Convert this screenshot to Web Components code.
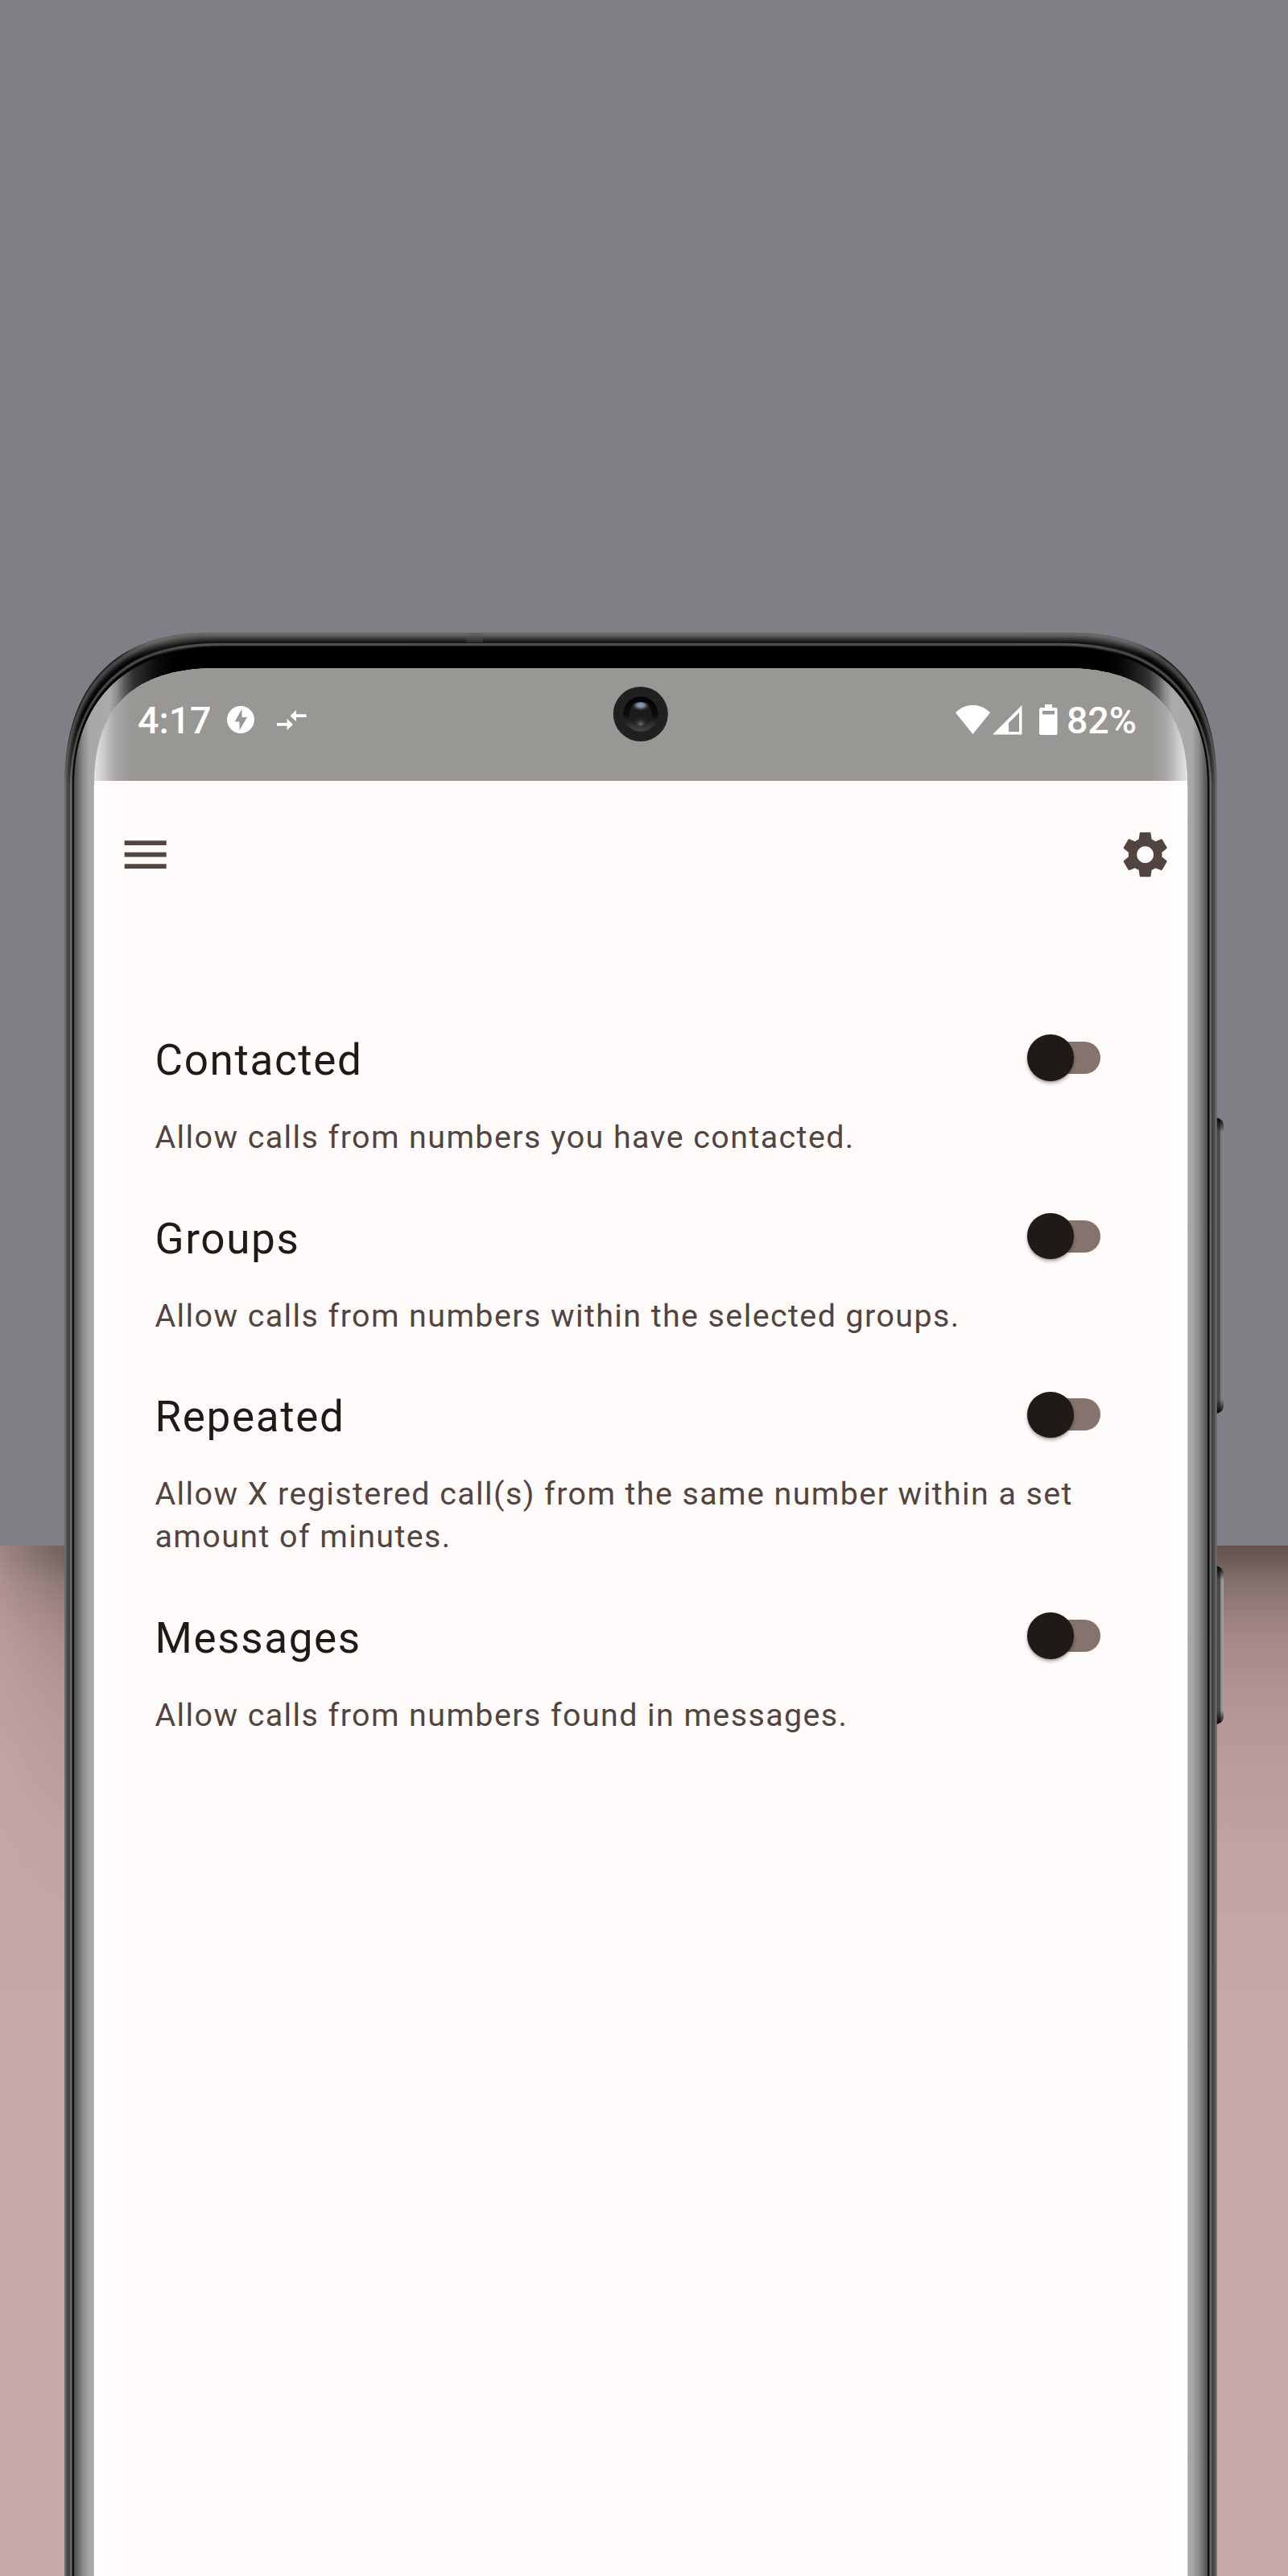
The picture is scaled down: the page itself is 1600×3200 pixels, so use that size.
<!DOCTYPE html>
<html lang="en">
<head>
<meta charset="utf-8">
<title>Call filter</title>
<style>
body{margin:0;font-family:Roboto,"Liberation Sans",sans-serif}
</style>
</head>
<body>
<promo-stage>
  <phone-frame>
    <status-bar slot="status" time="4:17" battery="82%"></status-bar>
    <app-bar></app-bar>
    <settings-list>
      <setting-row heading="Contacted">Allow calls from numbers you have contacted.</setting-row>
      <setting-row heading="Groups">Allow calls from numbers within the selected groups.</setting-row>
      <setting-row heading="Repeated">Allow X registered call(s) from the same number within a set amount of minutes.</setting-row>
      <setting-row heading="Messages">Allow calls from numbers found in messages.</setting-row>
    </settings-list>
  </phone-frame>
</promo-stage>
<script>
const define = (name, html, setup) => customElements.define(name, class extends HTMLElement {
  constructor() {
    super();
    this.attachShadow({ mode: 'open' }).innerHTML = html;
  }
  connectedCallback() { if (setup && !this.ready) { this.ready = true; setup(this, this.shadowRoot); } }
});

define('promo-stage', `
<style>
:host{display:flex;box-sizing:border-box;width:1600px;height:3200px;padding:786px 88px 0 80px;overflow:hidden;
background:
 linear-gradient(90deg,rgba(199,168,168,.6) 0,rgba(199,168,168,.12) 80px,transparent 81px) 0 1920px/100% 480px no-repeat,
 linear-gradient(180deg,#655352 0,#6b5a59 16px,#84706f 46px,#9b7f80 87px,#a58888 115px,#b09292 175px,#b99a9a 253px,#c1a1a2 368px,#c5a6a6 482px,#c8a9a9 640px) 0 1920px/100% 1280px no-repeat,
 #7f8085}
</style><slot></slot>`);

define('phone-frame', `
<style>
:host{display:block;position:relative;width:1432px;height:2414px}
svg{position:absolute;left:0;top:0;overflow:visible}
.screen{box-sizing:border-box;display:flex;flex-direction:column;position:relative;width:1358px;height:2370px;margin:0 37px;top:44px;
background:linear-gradient(90deg,#fff,#fffbfa 32px,#fffbfa 1326px,#fff);
clip-path:path('M0 2370V145C0 50 48 0 153 0H1205C1310 0 1358 50 1358 145V2370Z')}
</style>
<svg class="shell" width="1520" height="2414" viewBox="80 786 1520 2414">
 <defs>
  <linearGradient id="bez" gradientUnits="userSpaceOnUse" x1="91.5" y1="0" x2="1501" y2="0"></linearGradient>
  <linearGradient id="btn" x1="0" x2="1" y1="0" y2="0"><stop offset="0" stop-color="#333"/><stop offset=".2" stop-color="#484848"/><stop offset=".6" stop-color="#484848"/><stop offset=".68" stop-color="#777"/><stop offset="1" stop-color="#858585"/></linearGradient>
  <linearGradient id="btn2" x1="0" x2="1" y1="0" y2="0"><stop offset="0" stop-color="#333"/><stop offset=".2" stop-color="#484848"/><stop offset=".6" stop-color="#484848"/><stop offset=".75" stop-color="#8f9190"/><stop offset="1" stop-color="#a0a5a3"/></linearGradient>
  <linearGradient id="cap" gradientUnits="userSpaceOnUse" x1="0" x2="0" y1="1388" y2="1756.5"><stop offset="0"/><stop offset=".05" stop-opacity="0"/><stop offset=".95" stop-opacity="0"/><stop offset="1"/></linearGradient>
  <linearGradient id="cap2" gradientUnits="userSpaceOnUse" x1="0" x2="0" y1="1945" y2="2142.5"><stop offset="0"/><stop offset=".09" stop-opacity="0"/><stop offset=".91" stop-opacity="0"/><stop offset="1"/></linearGradient>
 </defs>
 <path d="M1508 1388Q1520 1389 1520 1399V1746Q1520 1755 1508 1756.500Z" fill="url(#btn)"/>
 <path d="M1508 1388Q1520 1389 1520 1399V1746Q1520 1755 1508 1756.500Z" fill="url(#cap)"/>
 <path d="M1508 1945Q1520 1946 1520 1956V2132Q1520 2141 1508 2142.500Z" fill="url(#btn2)"/>
 <path d="M1508 1945Q1520 1946 1520 1956V2132Q1520 2141 1508 2142.500Z" fill="url(#cap2)"/>
 <g id="rings"></g>
 <rect x="579" y="787" width="21" height="11" fill="#555" fill-opacity=".35"/>
</svg>
<div class="screen"><slot name="status"></slot><slot></slot></div>
<svg width="1432" height="200" viewBox="80 786 1432 200">
 <defs>
  <linearGradient id="ring" x1="0" x2="0" y1="0" y2="1"><stop offset="0" stop-color="#020202"/><stop offset=".5" stop-color="#0a0a0a"/><stop offset="1" stop-color="#474747"/></linearGradient>
  <radialGradient id="top" cx=".5" cy=".25" r=".5"><stop offset="0" stop-color="#8f9db8"/><stop offset=".35" stop-color="#8088a0"/><stop offset="1" stop-color="#1b1b1b" stop-opacity="0"/></radialGradient>
  <radialGradient id="bot" cx=".5" cy=".95" r=".35"><stop offset="0" stop-color="#777"/><stop offset="1" stop-color="#1b1b1b" stop-opacity="0"/></radialGradient>
 </defs>
 <circle cx="795.800" cy="887" r="34" fill="#202020"/>
 <circle cx="795.800" cy="887" r="21.700" fill="url(#ring)"/>
 <circle cx="795.800" cy="887" r="14.200" fill="#1b1b1b"/>
 <ellipse cx="795.800" cy="880" rx="12.500" ry="8" fill="url(#top)"/>
 <circle cx="795.800" cy="887" r="14.200" fill="url(#bot)"/>
</svg>`, (host, root) => {
  const ns = 'http://www.w3.org/2000/svg';
  const make = (n, a, p) => { const e = document.createElementNS(ns, n); for (const k in a) e.setAttribute(k, a[k]); p.append(e); return e; };
  const rings = root.querySelector('#rings'), defs = root.querySelector('defs');
  // Outline of the shell: t=0 outer edge, t=1 inner edge of the metal rim
  const A = [80, 1511.7, 786, 145, 850, 257], B = [91.5, 1500.5, 803, 160, 868, 275];
  const outline = t => {
    const [l, r, y, cx, cy, ex] = A.map((v, i) => v + (B[i] - v) * t);
    const m = v => l + r - v;
    return `M${l} 3210V975C${l} ${cy} ${cx} ${y} ${ex} ${y}H${m(ex)}C${m(cx)} ${y} ${r} ${cy} ${r} 975V3210Z`;
  };
  const ramp = (stops, t) => {
    let i = 1; while (i < stops.length - 1 && stops[i][0] < t) i++;
    const [a, u] = stops[i - 1], [b, v] = stops[i];
    const c = Math.round(u + (v - u) * Math.min(1, Math.max(0, (t - a) / (b - a))));
    return `rgb(${c},${c},${c})`;
  };
  const top = [[0, 100], [.1, 106], [.3, 75], [.65, 22], [.72, 5], [.76, 85], [.9, 95], [.95, 40], [1, 0]];
  const corner = [[0, 10], [.05, 60], [.18, 75], [.45, 15], [.64, 0], [.7, 60], [.76, 85], [.82, 60], [.88, 0], [1, 0]];
  const side = [[0, 105], [.1, 105], [.3, 72], [.55, 62], [.62, 105], [.77, 108], [.82, 40], [.88, 8], [1, 12]];
  const N = 24;
  for (let i = 0; i <= N; i++) {
    const t = i / N;
    const g = make('linearGradient', { id: 'r' + i, gradientUnits: 'userSpaceOnUse', x1: 0, x2: 0, y1: 786, y2: 986 }, defs);
    [[0, top], [.06, top], [.16, corner], [.5, corner], [.95, side]].forEach(([o, s]) => make('stop', { offset: o, 'stop-color': ramp(s, t) }, g));
    make('path', { d: outline(t), fill: `url(#r${i})` }, rings);
  }
  const bez = root.querySelector('#bez');
  const bs = [[0, 75], [4, 95], [12, 140], [20, 168], [45, 170], [54, 140], [62, 95], [74, 50], [90, 28], [105, 10], [125, 0]];
  const W = 1409.5;
  bs.forEach(([x, c]) => make('stop', { offset: x / W, 'stop-color': `rgb(${c},${c},${c})` }, bez));
  bs.reverse().forEach(([x, c]) => make('stop', { offset: 1 - x / W, 'stop-color': `rgb(${c},${c},${c})` }, bez));
  make('path', { d: outline(1.04), fill: 'url(#bez)' }, rings);
  make('path', { d: 'M116.500 3200V975M1475.500 975V3200', fill: 'none', stroke: '#c8c8c8', 'stroke-opacity': .6 }, rings);
});

define('status-bar', `
<style>
:host{display:flex;box-sizing:border-box;align-items:center;height:140px;padding:0 63px 12px 54px;color:#fff;font-size:46.500px;font-weight:500;line-height:56px;
background:linear-gradient(90deg,rgba(255,255,255,.75),rgba(255,255,255,.5) 12px,rgba(255,255,255,.17) 25px,transparent 45px,transparent 1313px,rgba(255,255,255,.17) 1333px,rgba(255,255,255,.5) 1346px,rgba(255,255,255,.75)),#999794}
svg{display:block;fill:#fff;flex:none}
span{padding-top:2px}
.sp{flex:1}
</style>
<span class="t"></span>
<svg width="34" height="34" viewBox="0 0 34 34" style="margin-left:19px"><path fill-rule="evenodd" d="M17 0a17 17 0 1 0 0 34a17 17 0 1 0 0-34ZM18.500 4L9.500 19.500H15.500V30L25 14H18.500Z"/></svg>
<svg width="37" height="25" viewBox="0 0 37 25" style="margin-left:28px"><path d="M24 0V5.300H36.500V9H24V14.300L16.500 7.200ZM0 16H12.500V10.700L20 17.900L12.500 25V19.700H0Z"/></svg>
<span class="sp"></span>
<svg width="43" height="36.500" viewBox="0 0 44 37" preserveAspectRatio="none"><path d="M0 9.500C12-3.200 32-3.200 44 9.500L22 36.500Z"/></svg>
<svg width="37" height="37" viewBox="0 0 37 37" style="margin-left:3px"><path fill-rule="evenodd" d="M36.500 0V36.500H0ZM33 9L20 22V33H33Z"/></svg>
<svg width="23" height="38" viewBox="0 0 23 38" style="margin-left:20.500px"><path d="M7 0H16V4H20Q22.500 4 22.500 6.500V35.500Q22.500 38 20 38H2.500Q0 38 0 35.500V6.500Q0 4 2.500 4H7Z"/><path fill="#999794" d="M4 8H19V12.500H4Z"/></svg>
<span class="b" style="margin-left:11px"></span>`, (h, r) => {
  r.querySelector('.t').textContent = h.getAttribute('time');
  r.querySelector('.b').textContent = h.getAttribute('battery');
});

define('app-bar', `
<style>
:host{display:flex;box-sizing:border-box;height:182px;padding:.6px 17.400px 0 28.500px;justify-content:space-between;align-items:center;color:#52443f}
svg{display:block;fill:#52443f}
</style>
<svg width="69.300" height="69.300" viewBox="0 0 24 24"><path d="M3 18h18v-2H3v2zm0-5h18v-2H3v2zm0-7v2h18V6H3z"/></svg>
<svg width="69.300" height="69.300" viewBox="0 0 24 24"><path d="M19.140 12.940c.04-.3.06-.61.06-.94 0-.32-.02-.64-.07-.94l2.030-1.580c.18-.14.23-.41.12-.61l-1.920-3.320c-.12-.22-.37-.29-.59-.22l-2.390.96c-.5-.38-1.030-.7-1.620-.94l-.36-2.540c-.04-.24-.24-.41-.48-.41h-3.840c-.24 0-.43.17-.47.41l-.36 2.540c-.59.24-1.130.57-1.620.94l-2.390-.96c-.22-.08-.47 0-.59.22L2.740 8.870c-.12.21-.08.47.12.61l2.030 1.580c-.05.3-.09.63-.09.94s.02.64.07.94l-2.030 1.580c-.18.14-.23.41-.12.61l1.920 3.320c.12.22.37.29.59.22l2.390-.96c.5.38 1.030.7 1.620.94l.36 2.540c.05.24.24.41.48.41h3.840c.24 0 .44-.17.47-.41l.36-2.540c.59-.24 1.130-.56 1.620-.94l2.390.96c.22.08.47 0 .59-.22l1.920-3.320c.12-.22.07-.47-.12-.61l-2.010-1.580zM12 15.600c-1.980 0-3.600-1.620-3.600-3.600s1.620-3.600 3.600-3.600 3.600 1.620 3.600 3.600-1.620 3.600-3.600 3.600z"/></svg>`);

define('settings-list', `
<style>:host{display:flex;flex-direction:column;gap:61.700px;padding:127px 107.700px 0 75.500px}</style><slot></slot>`);

define('setting-row', `
<style>
:host{display:flex;flex-direction:column;gap:37px}
.head{display:flex;justify-content:space-between;align-items:center;height:70px}
.title{padding-top:6px;font-size:53px;line-height:64px;letter-spacing:1.650px;color:#201a17}
.desc{font-size:39.400px;line-height:53px;letter-spacing:1.420px;color:#52443f}
</style>
<div class="head"><span class="title"></span><toggle-switch></toggle-switch></div>
<div class="desc"><slot></slot></div>`, (h, r) => { r.querySelector('.title').textContent = h.getAttribute('heading'); });

define('toggle-switch', `
<style>
:host{display:flex;align-items:center;width:91px;height:58px}
.track{display:flex;align-items:center;box-sizing:border-box;width:85px;height:40px;margin-left:6px;border-radius:20px;background:#85736d}
.thumb{width:57.500px;height:57.500px;margin-left:-6px;border-radius:50%;background:#201a17;box-shadow:0 3px 4px rgba(0,0,0,.28),0 1px 2px rgba(0,0,0,.2)}
</style>
<div class="track"><div class="thumb"></div></div>`);
</script>
</body>
</html>
